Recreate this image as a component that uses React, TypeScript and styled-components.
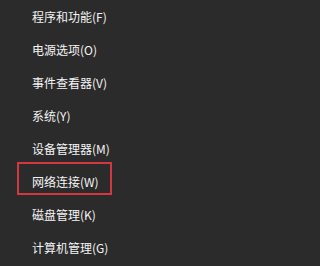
import React from 'react';
import styled, { createGlobalStyle } from 'styled-components';

const GlobalStyle = createGlobalStyle`
  html, body {
    margin: 0;
    padding: 0;
    background-color: #2b2b2b;
  }
`;

const items = [
  { label: '程序和功能(F)' },
  { label: '电源选项(O)' },
  { label: '事件查看器(V)' },
  { label: '系统(Y)' },
  { label: '设备管理器(M)' },
  { label: '网络连接(W)', marked: true },
  { label: '磁盘管理(K)' },
  { label: '计算机管理(G)' },
];

function App() {
  return (
    <>
      <GlobalStyle />
      <Menu>
        {items.map((item) => (
          <Row key={item.label}>
            <Label $marked={!!item.marked}>{item.label}</Label>
          </Row>
        ))}
      </Menu>
    </>
  );
}

export default App;

const Menu = styled.ul`
  list-style: none;
  margin: 0;
  padding: 0;
  width: 225px;
  height: 266px;
  background-color: #2b2b2b;
  overflow: hidden;
`;

const Row = styled.li`
  display: flex;
  align-items: center;
  height: 33px;
  padding-left: 32px;
  box-sizing: border-box;
`;

const Label = styled.span<{ $marked: boolean }>`
  position: relative;
  font-family: 'Noto Sans CJK SC', 'Microsoft YaHei', sans-serif;
  font-size: 12px;
  line-height: 14px;
  color: #f4f4f4;
  white-space: nowrap;

  &::after {
    content: '';
    display: ${(p) => (p.$marked ? 'block' : 'none')};
    position: absolute;
    left: -15px;
    right: -13px;
    top: -13px;
    bottom: -6px;
    border: 2px solid #d3373f;
  }
`;
